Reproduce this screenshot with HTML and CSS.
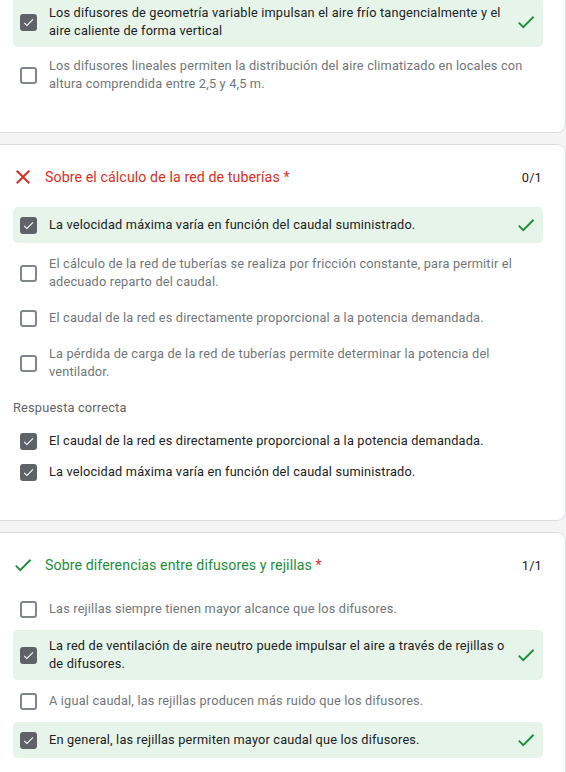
FILE: index.html
```html
<!DOCTYPE html>
<html lang="es">
<head>
<meta charset="utf-8">
<title>Resultados</title>
<link rel="stylesheet" href="styles.css">
</head>
<body>
<div class="page">

  <section class="card card-first">
    <div class="options">
      <div class="option selected">
        <span class="box checked"><svg viewBox="0 0 24 24"><path d="M9 16.17L4.83 12l-1.42 1.41L9 19 21 7l-1.41-1.41z"/></svg></span>
        <span class="opt-text">Los difusores de geometría variable impulsan el aire frío tangencialmente y el aire caliente de forma vertical</span>
        <svg class="mark" viewBox="0 0 24 24"><path d="M9 16.17L4.83 12l-1.42 1.41L9 19 21 7l-1.41-1.41z"/></svg>
      </div>
      <div class="option">
        <span class="box"></span>
        <span class="opt-text">Los difusores lineales permiten la distribución del aire climatizado en locales con altura comprendida entre 2,5 y 4,5 m.</span>
      </div>
    </div>
  </section>

  <section class="card card-second">
    <div class="q-header">
      <svg class="q-icon wrong" viewBox="0 0 24 24"><path d="M19 6.41L17.59 5 12 10.59 6.41 5 5 6.41 10.59 12 5 17.59 6.41 19 12 13.41 17.59 19 19 17.59 13.41 12z"/></svg>
      <div class="q-title wrong">Sobre el cálculo de la red de tuberías <span class="req">*</span></div>
      <div class="score">0/1</div>
    </div>
    <div class="options">
      <div class="option selected">
        <span class="box checked"><svg viewBox="0 0 24 24"><path d="M9 16.17L4.83 12l-1.42 1.41L9 19 21 7l-1.41-1.41z"/></svg></span>
        <span class="opt-text">La velocidad máxima varía en función del caudal suministrado.</span>
        <svg class="mark" viewBox="0 0 24 24"><path d="M9 16.17L4.83 12l-1.42 1.41L9 19 21 7l-1.41-1.41z"/></svg>
      </div>
      <div class="option">
        <span class="box"></span>
        <span class="opt-text">El cálculo de la red de tuberías se realiza por fricción constante, para permitir el adecuado reparto del caudal.</span>
      </div>
      <div class="option">
        <span class="box"></span>
        <span class="opt-text">El caudal de la red es directamente proporcional a la potencia demandada.</span>
      </div>
      <div class="option">
        <span class="box"></span>
        <span class="opt-text">La pérdida de carga de la red de tuberías permite determinar la potencia del ventilador.</span>
      </div>
    </div>
    <div class="correct-label">Respuesta correcta</div>
    <div class="correct-list">
      <div class="correct-item">
        <span class="box checked"><svg viewBox="0 0 24 24"><path d="M9 16.17L4.83 12l-1.42 1.41L9 19 21 7l-1.41-1.41z"/></svg></span>
        <span class="opt-text">El caudal de la red es directamente proporcional a la potencia demandada.</span>
      </div>
      <div class="correct-item">
        <span class="box checked"><svg viewBox="0 0 24 24"><path d="M9 16.17L4.83 12l-1.42 1.41L9 19 21 7l-1.41-1.41z"/></svg></span>
        <span class="opt-text">La velocidad máxima varía en función del caudal suministrado.</span>
      </div>
    </div>
  </section>

  <section class="card card-third">
    <div class="q-header">
      <svg class="q-icon right" viewBox="0 0 24 24"><path d="M9 16.17L4.83 12l-1.42 1.41L9 19 21 7l-1.41-1.41z"/></svg>
      <div class="q-title right">Sobre diferencias entre difusores y rejillas <span class="req">*</span></div>
      <div class="score">1/1</div>
    </div>
    <div class="options">
      <div class="option">
        <span class="box"></span>
        <span class="opt-text">Las rejillas siempre tienen mayor alcance que los difusores.</span>
      </div>
      <div class="option selected">
        <span class="box checked"><svg viewBox="0 0 24 24"><path d="M9 16.17L4.83 12l-1.42 1.41L9 19 21 7l-1.41-1.41z"/></svg></span>
        <span class="opt-text">La red de ventilación de aire neutro puede impulsar el aire a través de rejillas o de difusores.</span>
        <svg class="mark" viewBox="0 0 24 24"><path d="M9 16.17L4.83 12l-1.42 1.41L9 19 21 7l-1.41-1.41z"/></svg>
      </div>
      <div class="option">
        <span class="box"></span>
        <span class="opt-text">A igual caudal, las rejillas producen más ruido que los difusores.</span>
      </div>
      <div class="option selected">
        <span class="box checked"><svg viewBox="0 0 24 24"><path d="M9 16.17L4.83 12l-1.42 1.41L9 19 21 7l-1.41-1.41z"/></svg></span>
        <span class="opt-text">En general, las rejillas permiten mayor caudal que los difusores.</span>
        <svg class="mark" viewBox="0 0 24 24"><path d="M9 16.17L4.83 12l-1.42 1.41L9 19 21 7l-1.41-1.41z"/></svg>
      </div>
    </div>
  </section>

</div>
</body>
</html>
```

FILE: styles.css
```css
html, body {
  margin: 0;
  padding: 0;
  background: #f4f4f4;
}
body {
  font-family: Roboto, "Liberation Sans", Arial, sans-serif;
  color: #202124;
  width: 566px;
  height: 772px;
  overflow: hidden;
}
.page {
  display: flex;
  flex-direction: column;
  gap: 11px;
}
.card {
  background: #fff;
  border: 1px solid #dadce0;
  border-left: 0;
  border-radius: 0 9px 9px 0;
  padding: 22px 22px 32px 13px;
}
.card-first {
  border-top: 0;
  border-radius: 0 0 9px 0;
  margin-top: -4px;
  padding-top: 0;
  padding-bottom: 32px;
}
.card-second {
  padding-bottom: 33px;
}
.q-header {
  display: flex;
  align-items: center;
  height: 20px;
  margin-bottom: 16px;
  margin-left: -1px;
}
.card-second .q-header {
  margin-bottom: 19px;
}
.card-second .option.selected {
  margin-bottom: 3px;
}
.q-icon {
  width: 22px;
  height: 22px;
  flex: none;
}
.q-icon.wrong { fill: #d93025; width: 24px; height: 24px; margin-left: -1px; }
.q-icon.right { fill: #1e8e3e; }
.q-title {
  flex: 1;
  font-size: 14.2px;
  letter-spacing: 0.09px;
  line-height: 20px;
  padding-left: 10px;
}
.q-icon.right + .q-title { padding-left: 11px; }
.q-title.wrong { color: #d93025; }
.q-title.right { color: #1e8e3e; }
.req { color: #d93025; }
.score {
  font-size: 12.8px;
  letter-spacing: 0.2px;
  color: #202124;
  margin-right: 1px;
}
.options {
  display: flex;
  flex-direction: column;
  gap: 2px;
}
.option {
  display: flex;
  align-items: center;
  gap: 12px;
  padding: 7px 6px 7px 7px;
  min-height: 22px;
  border-radius: 5px;
}
.option.selected {
  background: #e6f4ea;
  margin: 1px 0;
}
.opt-text {
  flex: 1;
  font-size: 12.75px;
  letter-spacing: 0.18px;
  line-height: 18px;
  color: #70757a;
}
.option.selected .opt-text,
.correct-item .opt-text {
  color: #202124;
}
.box {
  flex: none;
  box-sizing: border-box;
  width: 17px;
  height: 17px;
  border: 2px solid #80868b;
  border-radius: 3px;
  display: flex;
  align-items: center;
  justify-content: center;
}
.box.checked {
  background: #5f6368;
  border-color: #5f6368;
}
.box svg {
  width: 15px;
  height: 15px;
  fill: #fff;
}
.mark {
  flex: none;
  width: 22px;
  height: 22px;
  fill: #1e8e3e;
  margin-left: -10px;
}
.correct-label {
  font-size: 12.75px;
  font-weight: 400;
  letter-spacing: 0.2px;
  line-height: 18px;
  color: #5f6368;
  margin-top: 11px;
  margin-bottom: 8px;
}
.correct-list {
  display: flex;
  flex-direction: column;
}
.correct-item {
  display: flex;
  align-items: center;
  gap: 12px;
  padding: 5px 0 4px 7px;
  min-height: 22px;
}
```
